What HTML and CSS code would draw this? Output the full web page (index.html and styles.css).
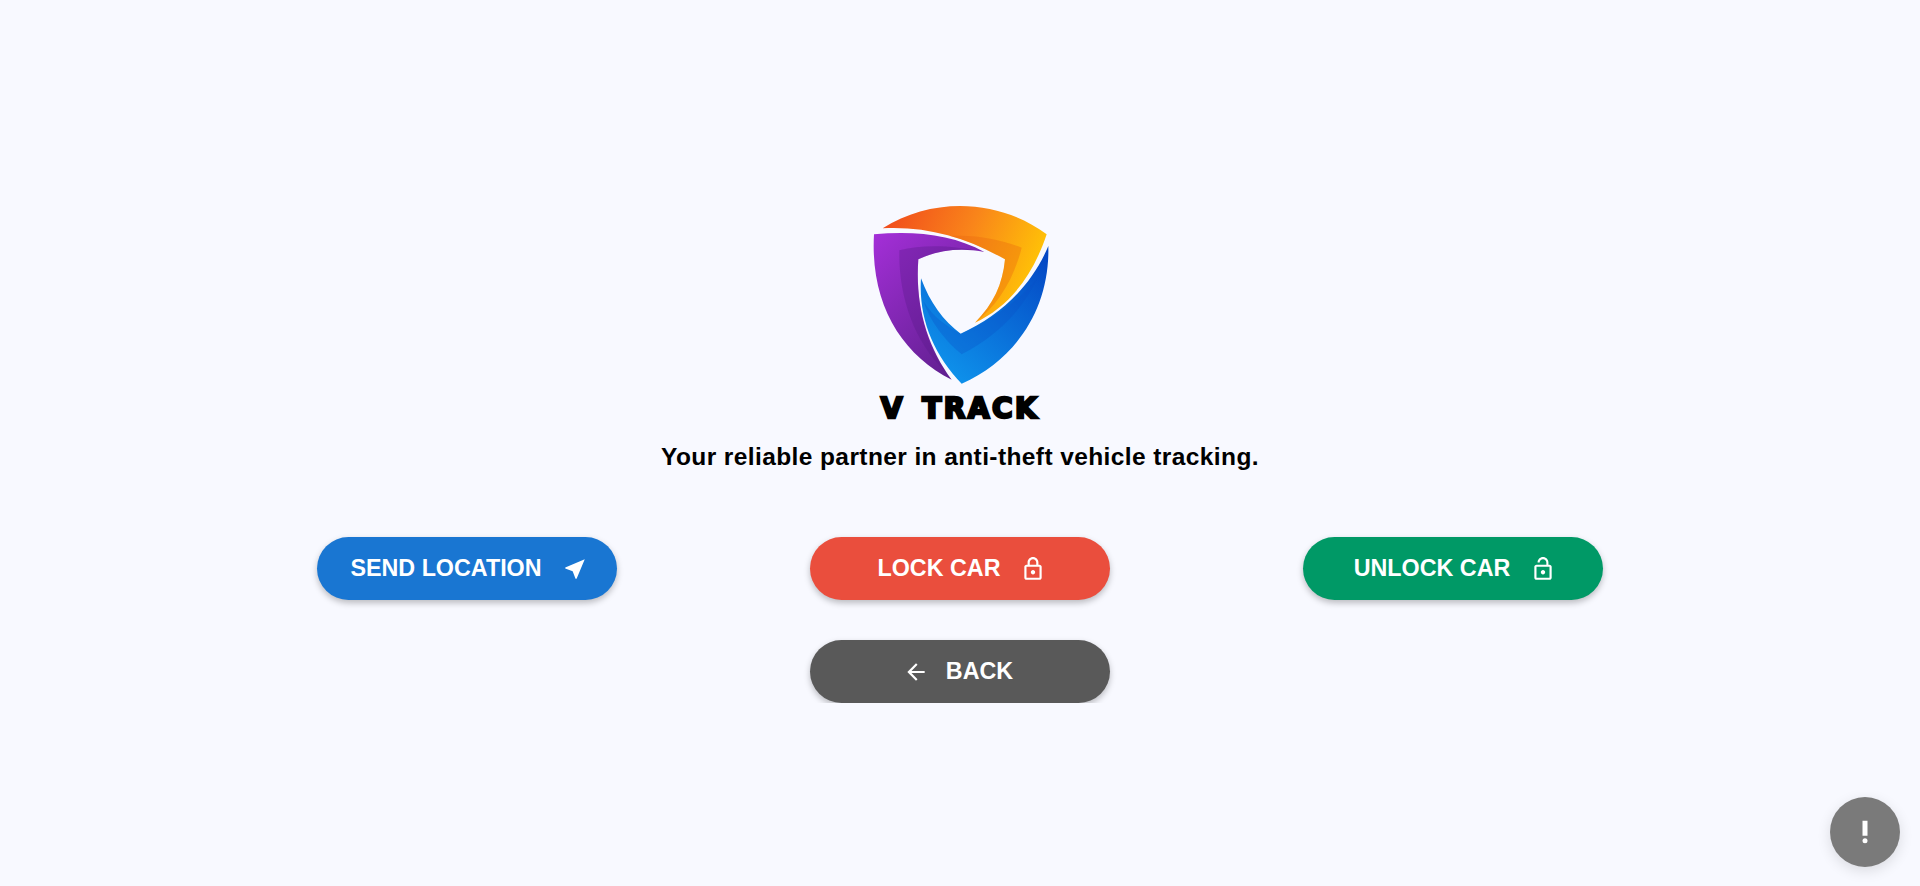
FILE: index.html
```html
<!DOCTYPE html>
<html>
<head>
    <title>V Track</title>
    <link rel="stylesheet" href="styles.css">
</head>
<body>
    <div class="page">
        <svg class="logo" viewBox="0 0 660 600" role="img" aria-label="V Track logo">
            <defs>
                <linearGradient id="orange" x1="0" y1="0" x2="1" y2="0.3">
                    <stop offset="0" stop-color="#f0461c"/>
                    <stop offset="0.55" stop-color="#f9851a"/>
                    <stop offset="1" stop-color="#ffc107"/>
                </linearGradient>
                <linearGradient id="purple" x1="0" y1="0" x2="0.7" y2="1">
                    <stop offset="0" stop-color="#a42fd8"/>
                    <stop offset="1" stop-color="#5f1f8e"/>
                </linearGradient>
                <linearGradient id="blue" x1="0.9" y1="0" x2="0.2" y2="0.9">
                    <stop offset="0" stop-color="#0447c4"/>
                    <stop offset="1" stop-color="#0e90ea"/>
                </linearGradient>
            </defs>
            <path fill="url(#orange)" d="M98 112 C250 15 450 25 590 130 C545 265 470 350 375 395 C430 340 458 280 465 205 C350 140 230 105 98 112Z"/>
            <path fill="#e8650f" opacity="0.35" d="M515 170 C490 270 440 345 375 395 C430 340 458 280 465 205 C410 175 360 150 300 135 C380 130 450 145 515 170Z"/>
            <path fill="url(#purple)" d="M72 130 C190 118 310 130 403 183 C340 170 265 175 205 205 C195 340 230 465 305 566 C155 490 60 340 72 130Z"/>
            <path fill="#5a1a8a" opacity="0.35" d="M148 178 C220 160 300 162 403 183 C340 170 265 175 205 205 C195 340 230 465 285 540 C190 450 145 310 148 178Z"/>
            <path fill="url(#blue)" d="M595 165 C600 350 500 505 335 578 C250 490 205 380 213 262 C240 335 280 390 332 428 C450 375 545 285 595 165Z"/>
            <path fill="#0a4fc8" opacity="0.3" d="M560 265 C510 370 430 440 335 490 C285 450 240 390 220 330 C250 380 290 405 332 428 C420 390 500 335 560 265Z"/>
        </svg>
        <div class="brand">V TRACK</div>
        <p class="tagline">Your reliable partner in anti-theft vehicle tracking.</p>

        <div class="actions">
            <button class="btn btn-blue">SEND LOCATION
                <svg class="icon" viewBox="0 0 24 24"><path d="M21 3 3 10.53v.98l6.84 2.65L12.48 21h.98L21 3z"/></svg>
            </button>
            <button class="btn btn-red">LOCK CAR
                <svg class="icon" viewBox="0 0 24 24"><path d="M18 8h-1V6c0-2.76-2.24-5-5-5S7 3.24 7 6v2H6c-1.1 0-2 .9-2 2v10c0 1.1.9 2 2 2h12c1.1 0 2-.9 2-2V10c0-1.1-.9-2-2-2zM9 6c0-1.66 1.34-3 3-3s3 1.34 3 3v2H9V6zm9 14H6V10h12v10zm-6-3c1.1 0 2-.9 2-2s-.9-2-2-2-2 .9-2 2 .9 2 2 2z"/></svg>
            </button>
            <button class="btn btn-green">UNLOCK CAR
                <svg class="icon" viewBox="0 0 24 24"><path d="M12 17c1.1 0 2-.9 2-2s-.9-2-2-2-2 .9-2 2 .9 2 2 2zm6-9h-1V6c0-2.76-2.24-5-5-5S7 3.24 7 6h1.9c0-1.71 1.39-3.1 3.1-3.1 1.71 0 3.1 1.39 3.1 3.1v2H6c-1.1 0-2 .9-2 2v10c0 1.1.9 2 2 2h12c1.1 0 2-.9 2-2V10c0-1.1-.9-2-2-2zm0 12H6V10h12v10z"/></svg>
            </button>
        </div>
        <button class="btn btn-grey">
            <svg class="icon" viewBox="0 0 24 24"><path d="M20 11H7.83l5.59-5.59L12 4l-8 8 8 8 1.41-1.41L7.83 13H20v-2z"/></svg>
            BACK
        </button>
    </div>
    <button class="fab" aria-label="Report">
        <svg class="fab-icon" viewBox="0 0 24 24"><circle cx="12" cy="19" r="2"/><path d="M10 3h4v12h-4z"/></svg>
    </button>
</body>
</html>
```
FILE: styles.css
```css
body {
    margin: 0;
    background-color: #f8f9ff;
    font-family: "Liberation Sans", Arial, sans-serif;
}

.page {
    display: flex;
    flex-direction: column;
    align-items: center;
    padding-top: 191px;
}

.logo {
    width: 220px;
    height: 200px;
}

.brand {
    font-family: "DejaVu Sans", sans-serif;
    font-size: 28px;
    font-weight: bold;
    line-height: 28px;
    color: #000;
    -webkit-text-stroke: 2.5px #000;
    letter-spacing: 2.5px;
    word-spacing: 5px;
    margin-top: 4px;
}

.tagline {
    margin: 19px 0 0 0;
    font-size: 24.5px;
    font-weight: bold;
    line-height: 30px;
    color: #000;
    letter-spacing: 0.4px;
}

.actions {
    display: flex;
    justify-content: space-between;
    width: 1286px;
    margin-top: 65px;
}

.btn {
    display: flex;
    align-items: center;
    justify-content: center;
    gap: 20px;
    width: 300px;
    height: 63px;
    padding: 0 0 0 4px;
    border: none;
    border-radius: 32px;
    color: #fff;
    font-family: inherit;
    font-size: 23.3px;
    font-weight: bold;
    box-shadow: 0 3px 6px rgba(0, 0, 0, 0.25);
    cursor: pointer;
}

.btn-blue { background-color: #1976d2; }
.btn-red { background-color: #ea4e3d; }
.btn-green { background-color: #009966; }
.btn-grey {
    background-color: #595959;
    gap: 17px;
    padding: 0 4px 0 0;
    margin-top: 40px;
}

.icon {
    width: 26px;
    height: 26px;
    fill: #fff;
}

.fab {
    position: fixed;
    right: 20px;
    bottom: 19px;
    width: 70px;
    height: 70px;
    display: flex;
    align-items: center;
    justify-content: center;
    padding: 0;
    border: none;
    border-radius: 50%;
    background-color: #7a7a7a;
    box-shadow: 0 4px 14px rgba(0, 0, 0, 0.12);
}

.fab-icon {
    width: 30px;
    height: 30px;
    fill: #fff;
}
```
